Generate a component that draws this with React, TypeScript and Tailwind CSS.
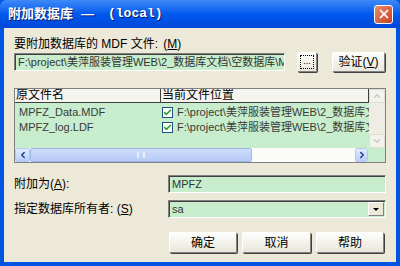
import { Check, ChevronDown, ChevronLeft, ChevronRight, ChevronUp, X } from "lucide-react";

const font = "font-['Liberation_Sans','Noto_Sans_CJK_SC',sans-serif]";

const Btn = ({ children, className = "" }: { children: React.ReactNode; className?: string }) => (
  <div
    className={`flex items-center justify-center rounded-[2px] border border-t-white border-l-white border-r-[#808080] border-b-[#808080] bg-gradient-to-b from-[#fdfdfb] to-[#e9e7dc] shadow-[1px_1px_0_#404040] text-[12px] text-black ${className}`}
  >
    {children}
  </div>
);

const Field = ({ children, className = "" }: { children: React.ReactNode; className?: string }) => (
  <div
    className={`flex items-center h-[18px] bg-[#c7edcc] border border-t-[#808080] border-l-[#808080] border-r-white border-b-white shadow-[inset_1px_1px_0_#404040] px-[3px] text-[11px] text-[#333] overflow-hidden whitespace-nowrap ${className}`}
  >
    {children}
  </div>
);

const CheckBox = () => (
  <div className="w-[11px] h-[11px] bg-white border border-[#1c5180] flex items-center justify-center shrink-0">
    <Check size={9} strokeWidth={4} className="text-[#21a121]" />
  </div>
);

const rows = ["MPFZ_Data.MDF", "MPFZ_log.LDF"];

export default function App() {
  return (
    <div className={`w-[400px] h-[266px] flex flex-col bg-[#0054e3] ${font}`}>
      {/* title bar */}
      <div className="h-[28px] shrink-0 flex items-center justify-between pl-[8px] pr-[7px] bg-gradient-to-b from-[#3d8af7] via-[#0058ee] to-[#0048d8] rounded-t-[6px]">
        <div className="flex items-center text-white font-bold text-[13px] [text-shadow:1px_1px_0_#0a1e6e]">
          <span>附加数据库</span>
          <span className="ml-[8px]">—</span>
          <span className="ml-[14px] font-['Liberation_Mono',monospace]">(local)</span>
        </div>
        <div className="w-[19px] h-[19px] rounded-[3px] border border-white bg-gradient-to-br from-[#ec8a6a] to-[#c4401d] flex items-center justify-center">
          <X size={14} strokeWidth={3} className="text-white" />
        </div>
      </div>

      {/* body */}
      <div className="flex-1 mx-[4px] mb-[4px] bg-[#ece9d8] flex flex-col px-[10px] pt-[10px]">
        <div className="h-[13px] leading-[13px] text-[12px] text-black">
          要附加数据库的 MDF 文件: <span className="ml-[2px]">(<span className="underline">M</span>)</span>
        </div>

        <div className="mt-[1px] h-[20px] flex items-center">
          <Field className="w-[271px]">
            F:\project\美萍服装管理WEB\2_数据库文档\空数据库\MPFZ_Data.MDF
          </Field>
          <Btn className="ml-[12px] w-[20px] h-[20px] shadow-[1px_1px_0_#000]">
            <div className="w-[14px] h-[14px] border border-dotted border-black flex items-end justify-center pb-[2px] text-[9px] leading-none">
              ...
            </div>
          </Btn>
          <Btn className="ml-[15px] w-[53px] h-[20px]">
            验证(<span className="underline">V</span>)
          </Btn>
        </div>

        {/* grid */}
        <div className="mt-[16px] h-[75px] border border-[#7f7f7f] flex flex-col bg-[#c7edcc]">
          <div className="flex flex-1 min-h-0">
            <div className="flex-1 min-w-0 overflow-hidden flex flex-col">
              <div className="h-[14px] flex bg-[#f5f4ef] border-b border-[#404040] text-[12px] leading-[13px] text-black">
                <div className="w-[146px] pl-[1px] border-r border-[#404040]">原文件名</div>
                <div className="flex-1 pl-[1px] border-r border-[#404040]">当前文件位置</div>
              </div>
              <div className="pt-[2px]">
                {rows.map((r) => (
                  <div key={r} className="h-[15px] flex items-center text-[11px] text-[#3a3a3a]">
                    <div className="w-[147px] shrink-0 pl-[4px]">{r}</div>
                    <div className="flex-1 min-w-0 flex items-center gap-[4px] overflow-hidden whitespace-nowrap">
                      <CheckBox />
                      <span>F:\project\美萍服装管理WEB\2_数据库文档</span>
                    </div>
                  </div>
                ))}
              </div>
            </div>
            <div className="w-[16px] shrink-0 flex flex-col bg-[#eeede5]">
              <div className="h-[14px] flex items-center justify-center bg-[#f3f2ec] border border-[#e0ded3] rounded-[2px]">
                <ChevronUp size={10} strokeWidth={3} className="text-[#c9c7bb]" />
              </div>
              <div className="flex-1" />
              <div className="h-[14px] flex items-center justify-center bg-[#f3f2ec] border border-[#e0ded3] rounded-[2px]">
                <ChevronDown size={10} strokeWidth={3} className="text-[#c9c7bb]" />
              </div>
            </div>
          </div>
          <div className="h-[14px] flex bg-[#fbfbf8]">
            <div className="w-[15px] flex items-center justify-center bg-gradient-to-b from-[#e2ebfd] to-[#b8cdf7] border border-[#b5c8f0] rounded-[2px]">
              <ChevronLeft size={10} strokeWidth={3.5} className="text-[#1d3c8f]" />
            </div>
            <div className="w-[222px] bg-gradient-to-b from-[#cfdcfc] to-[#b6cbf7] border border-[#9cb5ea] rounded-[2px] flex items-center justify-center">
              <div className="w-[8px] h-[6px] border-x-2 border-[#e8eefc]" />
            </div>
            <div className="flex-1 bg-[#fbfbf8]" />
            <div className="w-[13px] flex items-center justify-center bg-gradient-to-b from-[#e2ebfd] to-[#b8cdf7] border border-[#b5c8f0] rounded-[2px]">
              <ChevronRight size={10} strokeWidth={3.5} className="text-[#1d3c8f]" />
            </div>
            <div className="w-[17px] bg-[#c7edcc]" />
          </div>
        </div>

        <div className="mt-[12px] h-[18px] flex items-center">
          <div className="w-[154px] text-[12px] text-black">
            附加为(<span className="underline">A</span>):
          </div>
          <Field className="flex-1">MPFZ</Field>
        </div>

        <div className="mt-[7px] h-[18px] flex items-center">
          <div className="w-[154px] text-[12px] text-black">
            指定数据库所有者: (<span className="underline">S</span>)
          </div>
          <Field className="flex-1 justify-between pr-[1px]">
            <span>sa</span>
            <div className="w-[16px] h-[14px] bg-[#ece9d8] border border-t-white border-l-white border-r-[#808080] border-b-[#808080] flex items-center justify-center">
              <div className="w-0 h-0 border-x-[3px] border-x-transparent border-t-[3px] border-t-black" />
            </div>
          </Field>
        </div>

        <div className="mt-[14px] flex justify-end gap-[5px] pr-[2px]">
          <Btn className="w-[68px] h-[21px]">确定</Btn>
          <Btn className="w-[69px] h-[21px]">取消</Btn>
          <Btn className="w-[68px] h-[21px]">帮助</Btn>
        </div>
      </div>
    </div>
  );
}
